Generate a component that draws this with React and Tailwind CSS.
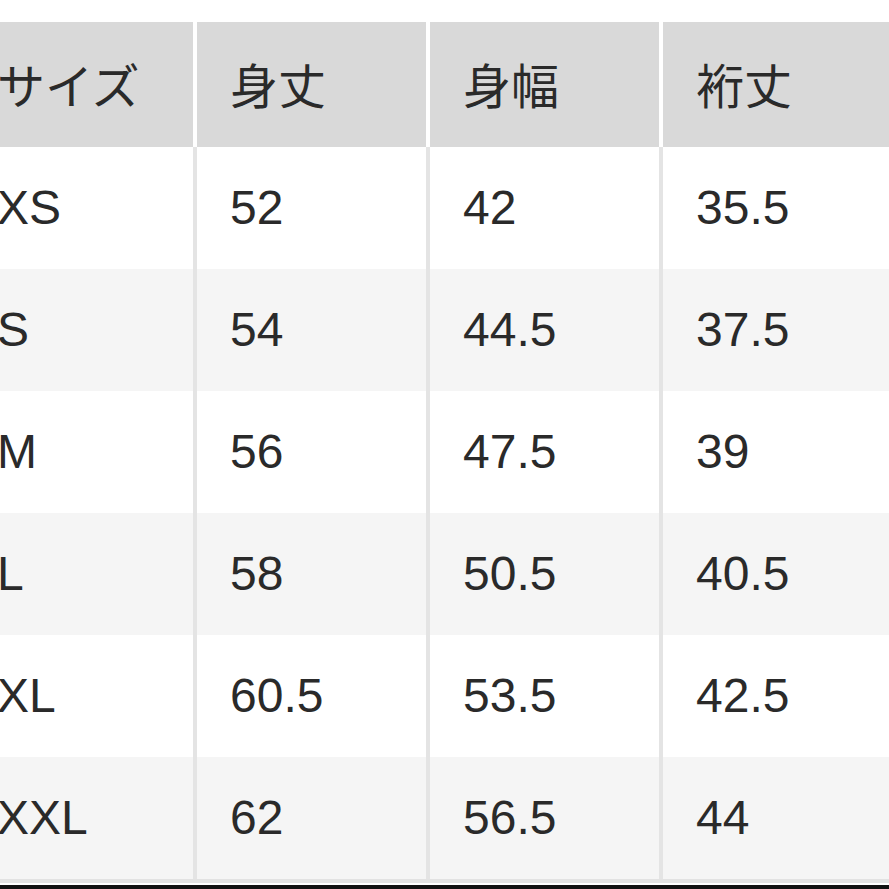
const headers = ["サイズ", "身丈", "身幅", "裄丈"];

const rows = [
  ["XS", "52", "42", "35.5"],
  ["S", "54", "44.5", "37.5"],
  ["M", "56", "47.5", "39"],
  ["L", "58", "50.5", "40.5"],
  ["XL", "60.5", "53.5", "42.5"],
  ["XXL", "62", "56.5", "44"],
];

const font = {
  fontFamily: '"Liberation Sans", "Noto Sans CJK JP", sans-serif',
};

export default function App() {
  return (
    <div className="h-[889px] w-[889px] overflow-hidden bg-white text-[#2a2a2a]" style={font}>
      <div className="ml-[-36px] pt-[22px]">
        {/* header */}
        <div className="flex h-[125px] bg-white">
          {headers.map((h) => (
            <div
              key={h}
              className="flex w-[233px] shrink-0 items-center border-r-4 border-white bg-[#d9d9d9] pt-[6px] pl-[33px] text-[48px] leading-none"
            >
              {h}
            </div>
          ))}
          <div className="w-[200px] shrink-0 bg-[#d9d9d9]" />
        </div>

        {/* body */}
        <div className="border-b-4 border-[#e2e2e2]">
          {rows.map((row, i) => (
            <div
              key={row[0]}
              className={`flex h-[122px] ${i % 2 === 0 ? "bg-white" : "bg-[#f5f5f5]"}`}
            >
              {row.map((cell, j) => (
                <div
                  key={j}
                  className="flex w-[233px] shrink-0 items-center border-r-4 border-[#e4e4e4] pl-[33px] text-[48px] leading-none"
                >
                  {cell}
                </div>
              ))}
              <div className="w-[200px] shrink-0" />
            </div>
          ))}
        </div>
        <div className="mt-[2px] h-[4px] w-[1000px] bg-[#111]" />
      </div>
    </div>
  );
}
